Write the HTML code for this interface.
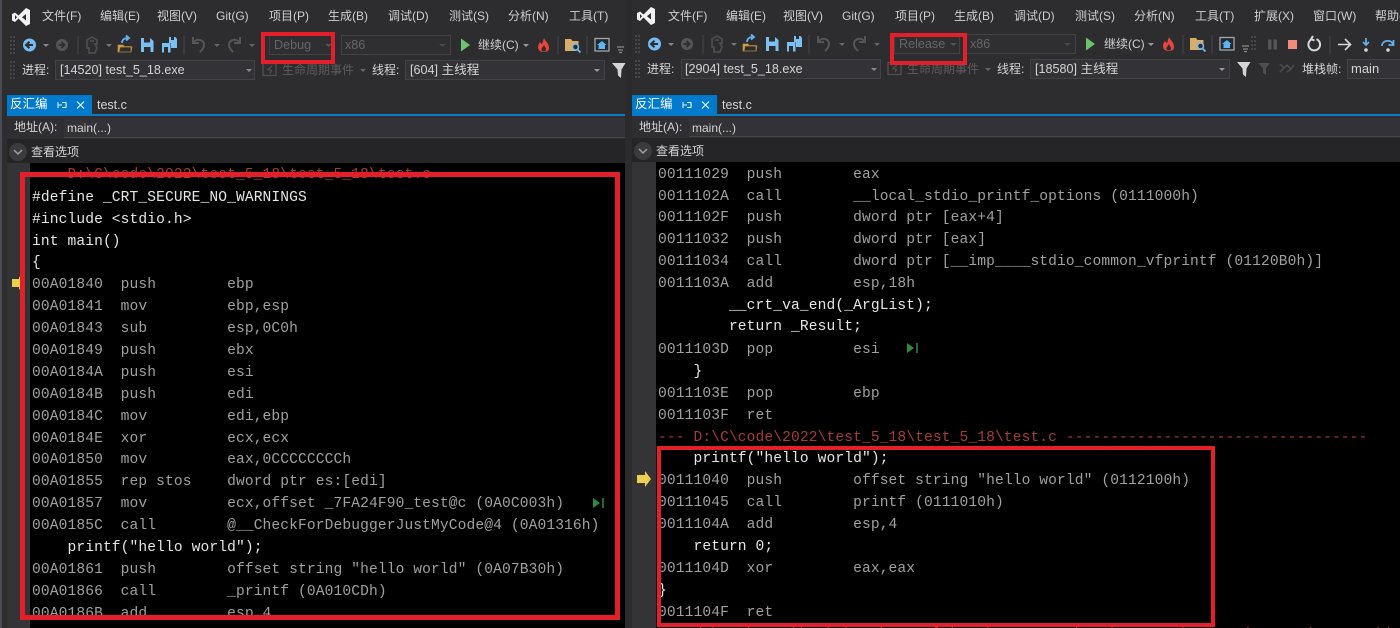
<!DOCTYPE html>
<html lang="zh"><head><meta charset="utf-8"><title>反汇编</title>
<style>
html,body{margin:0;padding:0;width:1400px;height:628px;overflow:hidden;background:#2d2d30}
body{position:relative;font-family:"Liberation Sans","Noto Sans CJK SC",sans-serif;font-size:12px;color:#d4d4d4}
.a,.t,.c,.m,.b{position:absolute}
.m,.t{white-space:nowrap;line-height:16px;height:16px}
.m{top:8px;color:#cfcfcf}
.p{font-size:12.6px}
.b{box-sizing:border-box;border:1px solid #434346;background:#333337}
.c{white-space:pre;font-family:"Liberation Mono","Noto Sans CJK SC",monospace;font-size:14.6px;letter-spacing:.11px;line-height:22px;height:22px;color:#a0a0a0;margin-top:2px}
.w{color:#e6e6e6}.r{color:#a83a3a}
svg{position:absolute;left:0;top:0}
</style></head><body>

<!-- window backgrounds -->
<div class="a" style="left:0;top:0;width:2px;height:628px;background:#4b4b55"></div>
<div class="a" style="left:625px;top:0;width:7px;height:628px;background:#2b2b2e"></div>

<!-- left panels -->
<div class="a" style="left:7px;top:95px;width:618px;height:21px;background:#2d2d30"></div>
<div class="a" style="left:7px;top:95px;width:85px;height:20px;background:#007acc"></div>
<div class="a" style="left:7px;top:114px;width:618px;height:2px;background:#0b79c4"></div>
<div class="a" style="left:7px;top:116px;width:618px;height:22px;background:#2f2f33"></div>
<div class="a" style="left:64px;top:118px;width:561px;height:19px;background:#333337;border-bottom:1px solid #47474a"></div>
<div class="a" style="left:7px;top:139px;width:618px;height:24px;background:#252527"></div>
<div class="a" style="left:7px;top:163px;width:23px;height:465px;background:#343436"></div>
<div class="a" style="left:30px;top:163px;width:595px;height:465px;background:#000"></div>

<!-- right panels -->
<div class="a" style="left:632px;top:95px;width:768px;height:21px;background:#2d2d30"></div>
<div class="a" style="left:632px;top:95px;width:85px;height:20px;background:#007acc"></div>
<div class="a" style="left:632px;top:114px;width:768px;height:2px;background:#0b79c4"></div>
<div class="a" style="left:632px;top:116px;width:768px;height:22px;background:#2f2f33"></div>
<div class="a" style="left:689px;top:118px;width:711px;height:18px;background:#333337;border-bottom:1px solid #47474a"></div>
<div class="a" style="left:632px;top:138px;width:768px;height:24px;background:#252527"></div>
<div class="a" style="left:632px;top:162px;width:24px;height:466px;background:#343436"></div>
<div class="a" style="left:656px;top:162px;width:744px;height:466px;background:#000"></div>

<!-- combos -->
<div class="b" style="left:269px;top:35px;width:65px;height:20px;background:#2f2f32"></div>
<div class="b" style="left:341px;top:35px;width:110px;height:20px;background:#2f2f32"></div>
<div class="b" style="left:55px;top:60px;width:200px;height:20px"></div>
<div class="b" style="left:405px;top:60px;width:200px;height:20px"></div>
<div class="b" style="left:894px;top:34px;width:66px;height:20px;background:#2f2f32"></div>
<div class="b" style="left:966px;top:34px;width:110px;height:20px;background:#2f2f32"></div>
<div class="b" style="left:681px;top:59px;width:200px;height:20px"></div>
<div class="b" style="left:1030px;top:59px;width:200px;height:20px"></div>
<div class="b" style="left:1347px;top:59px;width:60px;height:20px"></div>

<!-- icons -->
<svg width="1400" height="628" viewBox="0 0 1400 628">
<defs>
<g id="logo"><path d="M1 7l3-1.500 3.500 3L15 1l4 2v14l-4 2-7.500-7.500L4 15l-3-1.500zM4 8v4.500L6 10.300zM11 10.200l4 3.300V7z" fill="#f2f2f2" fill-rule="evenodd"/></g>
<g id="bar">
<g fill="#464646"><path d="M10 36h2v2h-2zM13 36h2v2h-2zM10 40h2v2h-2zM13 40h2v2h-2zM10 44h2v2h-2zM13 44h2v2h-2zM10 48h2v2h-2zM13 48h2v2h-2zM10 52h2v2h-2zM13 52h2v2h-2zM10 61h2v2h-2zM13 61h2v2h-2zM10 65h2v2h-2zM13 65h2v2h-2zM10 69h2v2h-2zM13 69h2v2h-2zM10 73h2v2h-2zM13 73h2v2h-2zM10 77h2v2h-2zM13 77h2v2h-2z"/></g>
<circle cx="29.500" cy="45" r="6.500" fill="#75bdf2"/><path d="M33 45h-6M29.500 41.800L26 45l3.500 3.200" fill="none" stroke="#2d2d30" stroke-width="2"/>
<path d="M43 44h6l-3 3z" fill="#8a8a8a"/>
<circle cx="62" cy="45" r="6" fill="#555"/><path d="M58.500 45h6M61.500 42l3 3-3 3" fill="none" stroke="#2d2d30" stroke-width="1.800"/>
<path d="M78 36v18.500" stroke="#3f3f43" stroke-width="1.500"/>
<path d="M87 40l5-3 5 3v4h-2l2 4-2 5h-6v-5h-2zM90 41h4" fill="none" stroke="#4c4c4c" stroke-width="1.800"/>
<path d="M106 44h6l-3 3z" fill="#777"/>
<path d="M118 52V45h5l1 1.500h7V52zM120 47l-1 5h12l1-5z" fill="#d9a757" stroke="#b88838" stroke-width=".8"/><path d="M122 43c0-3 2-5 6-5m-2-2.500l3 2.500-3 2.500" fill="none" stroke="#62b3ee" stroke-width="1.800"/>
<path d="M141 38h9l3.500 3v11H141z" fill="#7cc0f3"/><path d="M144 38h6v4.500h-6z" fill="#2d2d30"/><path d="M144 47h6.500v5H144z" fill="#2d2d30"/>
<path d="M162 43h8.500v9.500H162z" fill="#7cc0f3"/><path d="M164 47h4v5.500h-4z" fill="#2d2d30"/><path d="M169 37h6.500l1.500 2v9h-6v-5h-2z" fill="#7cc0f3"/><path d="M171 37h3v3h-3z" fill="#2d2d30"/>
<path d="M184 36v18.500" stroke="#3f3f43" stroke-width="1.500"/>
<path d="M193 37v6h6M193 43c3-5 11-4 11 2 0 3-2 5-4 7" fill="none" stroke="#555" stroke-width="2"/>
<path d="M214 44h6l-3 3z" fill="#666"/>
<path d="M240 37v6h-6M240 43c-3-5-11-4-11 2 0 3 2 5 4 7" fill="none" stroke="#555" stroke-width="2"/>
<path d="M249 44h6l-3 3z" fill="#666"/>
<path d="M325 44h7l-3.500 3z" fill="#555"/><path d="M439 44h7l-3.500 3z" fill="#4a4a4a"/>
<path d="M461 38.500L470 45l-9 6.500z" fill="#6cc36e"/>
<path d="M523 44h6l-3 3z" fill="#9a9a9a"/>
<path d="M544 38c1 3 5 5 5 10 0 3-2 4-5.500 4S538 50 538 47c0-2 1-3 2-5 1 1 1 2 2 2 1-2 1-4 2-6z" fill="#e8463a"/><path d="M544 45c1 2 2 3 2 4.500 0 1.500-1 2-2.500 2s-2-1-2-2c0-1.500 1.500-2.500 2.500-4.500z" fill="#2d2d30"/>
<path d="M558 36v18.500" stroke="#3f3f43" stroke-width="1.500"/>
<path d="M565 39h6l1.500 2h6v7h-2v3h-11.500z" fill="#d6ae6a"/><circle cx="575.500" cy="47" r="3" fill="#2d2d30" stroke="#79bdf0" stroke-width="1.500"/><path d="M577.500 49.500l3 3" stroke="#79bdf0" stroke-width="1.600"/>
<path d="M587 36v18.500" stroke="#3f3f43" stroke-width="1.500"/>
<rect x="595" y="38.500" width="14" height="12.500" fill="#1f2a34" stroke="#a6a6a6" stroke-width="1.300"/><path d="M602 41l4.500 4h-1.500v4h-6.500v-4h-1.500z" fill="#62b3ee"/>
<path d="M617 47h7M618 50h5M619 52.500h3" stroke="#8a8a8a" stroke-width="1.200"/>
<path d="M246 69h6l-3 3z" fill="#8a8a8a"/>
<path d="M263 63.500h13v12h-13z" fill="none" stroke="#505050" stroke-width="1.300"/><path d="M272 66l-4 3.500 3.500 1-1.500 3" fill="none" stroke="#505050" stroke-width="1.200"/>
<path d="M360 69h6l-3 3z" fill="#666"/>
<path d="M594 69h6l-3 3z" fill="#9a9a9a"/>
</g>
<path id="filter" d="M0 0h13.500l-4 6.500-.5 8.500-3-2.500-.5-6z" fill="#d4d4d4"/>
</defs>
<use href="#logo" x="11" y="7"/>
<use href="#logo" x="636" y="6"/>
<use href="#bar"/>
<use href="#bar" x="625" y="-1"/>
<use href="#filter" x="612" y="63"/>
<use href="#filter" x="1237" y="62"/>
<!-- right extras -->
<path d="M1252 36v16M1255 36v16" stroke="#464646" stroke-width="2" stroke-dasharray="2 2"/>
<path d="M1268 39.500h3.500v10H1268zM1273.500 39.500h3.500v10h-3.500z" fill="#555"/>
<rect x="1288" y="40" width="9" height="9" fill="#f28b78"/>
<path d="M1312 39.200a5.800 5.800 0 1 0 4.500 0M1313 36l-2 3.200 3.500 1.300" fill="none" stroke="#d8d8d8" stroke-width="2"/>
<path d="M1330 36v17.500" stroke="#3f3f43" stroke-width="1.500"/>
<path d="M1338 44.500h12M1345 39l5.500 5.500-5.500 5.500" fill="none" stroke="#d8d8d8" stroke-width="1.600"/>
<path d="M1366 38v7M1363 42l3 3 3-3" fill="none" stroke="#62b3ee" stroke-width="1.700"/><circle cx="1366" cy="50" r="1.800" fill="#d8d8d8"/>
<path d="M1382 46c0-6 9-7 11-2M1393.500 40v5h-5" fill="none" stroke="#62b3ee" stroke-width="1.700"/><circle cx="1388" cy="50" r="1.800" fill="#d8d8d8"/>
<path d="M1258 63h12l-4 5v7l-3-2v-5zM1266 62l5-1" fill="#4e4e4e"/>
<path d="M1280 64l4 4 3-3 4 4 3-4M1280 72l4-4M1287 72l4-3" fill="none" stroke="#4e4e4e" stroke-width="1.500"/>
<!-- tab decorations -->
<path d="M58 102v6M58 105h4M62 102.500h4v5h-4M66 105h1M58 105" fill="none" stroke="#e8f4fc" stroke-width="1"/>
<path d="M683 102v6M683 105h4M687 102.500h4v5h-4M691 105h1" fill="none" stroke="#e8f4fc" stroke-width="1"/>
<path d="M77 101.500l7 7M84 101.500l-7 7M702 101.500l7 7M709 101.500l-7 7" stroke="#e8f4fc" stroke-width="1.200"/>
<!-- collapse -->
<circle cx="18" cy="152" r="9" fill="#3b3b3d"/><path d="M14 150l4 4 4-4" fill="none" stroke="#a0a0a0" stroke-width="1.500"/>
<circle cx="643" cy="151" r="9" fill="#3b3b3d"/><path d="M639 149l4 4 4-4" fill="none" stroke="#a0a0a0" stroke-width="1.500"/>
<!-- breakpoint arrows -->
<path d="M12 279h7v-3l5 7-5 7v-3h-7z" fill="#efcf4f"/>
<path d="M637 475h8v-4l6 8-6 8v-4h-8z" fill="#efcf4f"/>
<!-- run-to-click -->
<path d="M593 498l7 5-7 5z" fill="#2f8a3f"/><path d="M603 498v10" stroke="#2f8a3f" stroke-width="1.500"/>
<path d="M907 343l7 5-7 5z" fill="#2f8a3f"/><path d="M917 343v10" stroke="#2f8a3f" stroke-width="1.500"/>
</svg>

<!-- left menu -->
<span class="m" style="left:42px">文件(F)</span><span class="m" style="left:100px">编辑(E)</span><span class="m" style="left:157px">视图(V)</span><span class="m" style="left:216px">Git(G)</span><span class="m" style="left:269px">项目(P)</span><span class="m" style="left:328px">生成(B)</span><span class="m" style="left:388px">调试(D)</span><span class="m" style="left:449px">测试(S)</span><span class="m" style="left:508px">分析(N)</span><span class="m" style="left:569px">工具(T)</span>
<!-- right menu -->
<span class="m" style="left:668px">文件(F)</span><span class="m" style="left:726px">编辑(E)</span><span class="m" style="left:783px">视图(V)</span><span class="m" style="left:842px">Git(G)</span><span class="m" style="left:895px">项目(P)</span><span class="m" style="left:954px">生成(B)</span><span class="m" style="left:1014px">调试(D)</span><span class="m" style="left:1075px">测试(S)</span><span class="m" style="left:1134px">分析(N)</span><span class="m" style="left:1195px">工具(T)</span><span class="m" style="left:1254px">扩展(X)</span><span class="m" style="left:1313px">窗口(W)</span><span class="m" style="left:1375px">帮助(H)</span>

<!-- left toolbar text -->
<span class="t p" style="left:274px;top:37px;color:#666">Debug</span>
<span class="t p" style="left:345px;top:37px;color:#666">x86</span>
<span class="t" style="left:478px;top:37px;color:#cfcfcf">继续(C)</span>
<span class="t" style="left:22px;top:62px">进程:</span>
<span class="t p" style="left:60px;top:62px">[14520] test_5_18.exe</span>
<span class="t" style="left:282px;top:62px;color:#5c5c5c">生命周期事件</span>
<span class="t" style="left:372px;top:62px">线程:</span>
<span class="t p" style="left:410px;top:62px">[604] 主线程</span>
<span class="t" style="left:10px;top:96px;color:#fff;font-size:12.500px">反汇编</span>
<span class="t" style="left:97px;top:97px;font-size:12.500px">test.c</span>
<span class="t" style="left:14px;top:119px">地址(A):</span>
<span class="t" style="left:67px;top:120px">main(...)</span>
<span class="t" style="left:31px;top:144px">查看选项</span>

<!-- right toolbar text -->
<span class="t p" style="left:899px;top:36px;color:#666">Release</span>
<span class="t p" style="left:970px;top:36px;color:#666">x86</span>
<span class="t" style="left:1104px;top:36px;color:#cfcfcf">继续(C)</span>
<span class="t" style="left:647px;top:61px">进程:</span>
<span class="t p" style="left:685px;top:61px">[2904] test_5_18.exe</span>
<span class="t" style="left:907px;top:61px;color:#5c5c5c">生命周期事件</span>
<span class="t" style="left:997px;top:61px">线程:</span>
<span class="t p" style="left:1035px;top:61px">[18580] 主线程</span>
<span class="t" style="left:1302px;top:61px">堆栈帧:</span>
<span class="t" style="left:1351px;top:61px;font-size:13px">main</span>
<span class="t" style="left:635px;top:96px;color:#fff;font-size:12.500px">反汇编</span>
<span class="t" style="left:722px;top:97px;font-size:12.500px">test.c</span>
<span class="t" style="left:639px;top:119px">地址(A):</span>
<span class="t" style="left:692px;top:120px">main(...)</span>
<span class="t" style="left:656px;top:143px">查看选项</span>

<!-- left code -->
<div class="c r" style="left:32px;top:162px">    D:\C\code\2022\test_5_18\test_5_18\test.c</div>
<div class="c w" style="left:32px;top:185px">#define _CRT_SECURE_NO_WARNINGS</div>
<div class="c w" style="left:32px;top:207px">#include &lt;stdio.h&gt;</div>
<div class="c w" style="left:32px;top:229px">int main()</div>
<div class="c w" style="left:32px;top:250px">{</div>
<div class="c" style="left:32px;top:272px">00A01840  push        ebp</div>
<div class="c" style="left:32px;top:294px">00A01841  mov         ebp,esp</div>
<div class="c" style="left:32px;top:316px">00A01843  sub         esp,0C0h</div>
<div class="c" style="left:32px;top:338px">00A01849  push        ebx</div>
<div class="c" style="left:32px;top:360px">00A0184A  push        esi</div>
<div class="c" style="left:32px;top:382px">00A0184B  push        edi</div>
<div class="c" style="left:32px;top:404px">00A0184C  mov         edi,ebp</div>
<div class="c" style="left:32px;top:426px">00A0184E  xor         ecx,ecx</div>
<div class="c" style="left:32px;top:447px">00A01850  mov         eax,0CCCCCCCCh</div>
<div class="c" style="left:32px;top:469px">00A01855  rep stos    dword ptr es:[edi]</div>
<div class="c" style="left:32px;top:491px">00A01857  mov         ecx,offset _7FA24F90_test@c (0A0C003h)</div>
<div class="c" style="left:32px;top:513px">00A0185C  call        @__CheckForDebuggerJustMyCode@4 (0A01316h)</div>
<div class="c w" style="left:32px;top:535px">    printf("hello world");</div>
<div class="c" style="left:32px;top:557px">00A01861  push        offset string "hello world" (0A07B30h)</div>
<div class="c" style="left:32px;top:579px">00A01866  call        _printf (0A010CDh)</div>
<div class="c" style="left:32px;top:601px">00A0186B  add         esp,4</div>

<!-- right code -->
<div class="c" style="left:658px;top:162px">00111029  push        eax</div>
<div class="c" style="left:658px;top:184px">0011102A  call        __local_stdio_printf_options (0111000h)</div>
<div class="c" style="left:658px;top:205px">0011102F  push        dword ptr [eax+4]</div>
<div class="c" style="left:658px;top:227px">00111032  push        dword ptr [eax]</div>
<div class="c" style="left:658px;top:249px">00111034  call        dword ptr [__imp____stdio_common_vfprintf (01120B0h)]</div>
<div class="c" style="left:658px;top:271px">0011103A  add         esp,18h</div>
<div class="c w" style="left:658px;top:293px">        __crt_va_end(_ArgList);</div>
<div class="c w" style="left:658px;top:314px">        return _Result;</div>
<div class="c" style="left:658px;top:337px">0011103D  pop         esi</div>
<div class="c w" style="left:658px;top:359px">    }</div>
<div class="c" style="left:658px;top:381px">0011103E  pop         ebp</div>
<div class="c" style="left:658px;top:403px">0011103F  ret</div>
<div class="c r" style="left:658px;top:425px">--- D:\C\code\2022\test_5_18\test_5_18\test.c ----------------------------------</div>
<div class="c w" style="left:658px;top:446px">    printf("hello world");</div>
<div class="c" style="left:658px;top:468px">00111040  push        offset string "hello world" (0112100h)</div>
<div class="c" style="left:658px;top:490px">00111045  call        printf (0111010h)</div>
<div class="c" style="left:658px;top:512px">0011104A  add         esp,4</div>
<div class="c w" style="left:658px;top:534px">    return 0;</div>
<div class="c" style="left:658px;top:556px">0011104D  xor         eax,eax</div>
<div class="c w" style="left:658px;top:578px">}</div>
<div class="c" style="left:658px;top:600px">0011104F  ret</div>
<div class="c r" style="left:658px;top:622px">--- d:\a01\_work\12\s\src\vctools\crt\vcstartup\src\startup\exe_main.cpp (0112000h) --</div>

<!-- red annotation boxes -->
<div class="a" style="box-sizing:border-box;left:261px;top:32px;width:74px;height:32px;border:4px solid #e3202a"></div>
<div class="a" style="box-sizing:border-box;left:890px;top:33px;width:77px;height:32px;border:4px solid #e3202a"></div>
<div class="a" style="box-sizing:border-box;left:20px;top:172px;width:600px;height:448px;border:5px solid #e3202a"></div>
<div class="a" style="box-sizing:border-box;left:657px;top:446px;width:558px;height:181px;border:4px solid #e3202a"></div>
</body></html>
